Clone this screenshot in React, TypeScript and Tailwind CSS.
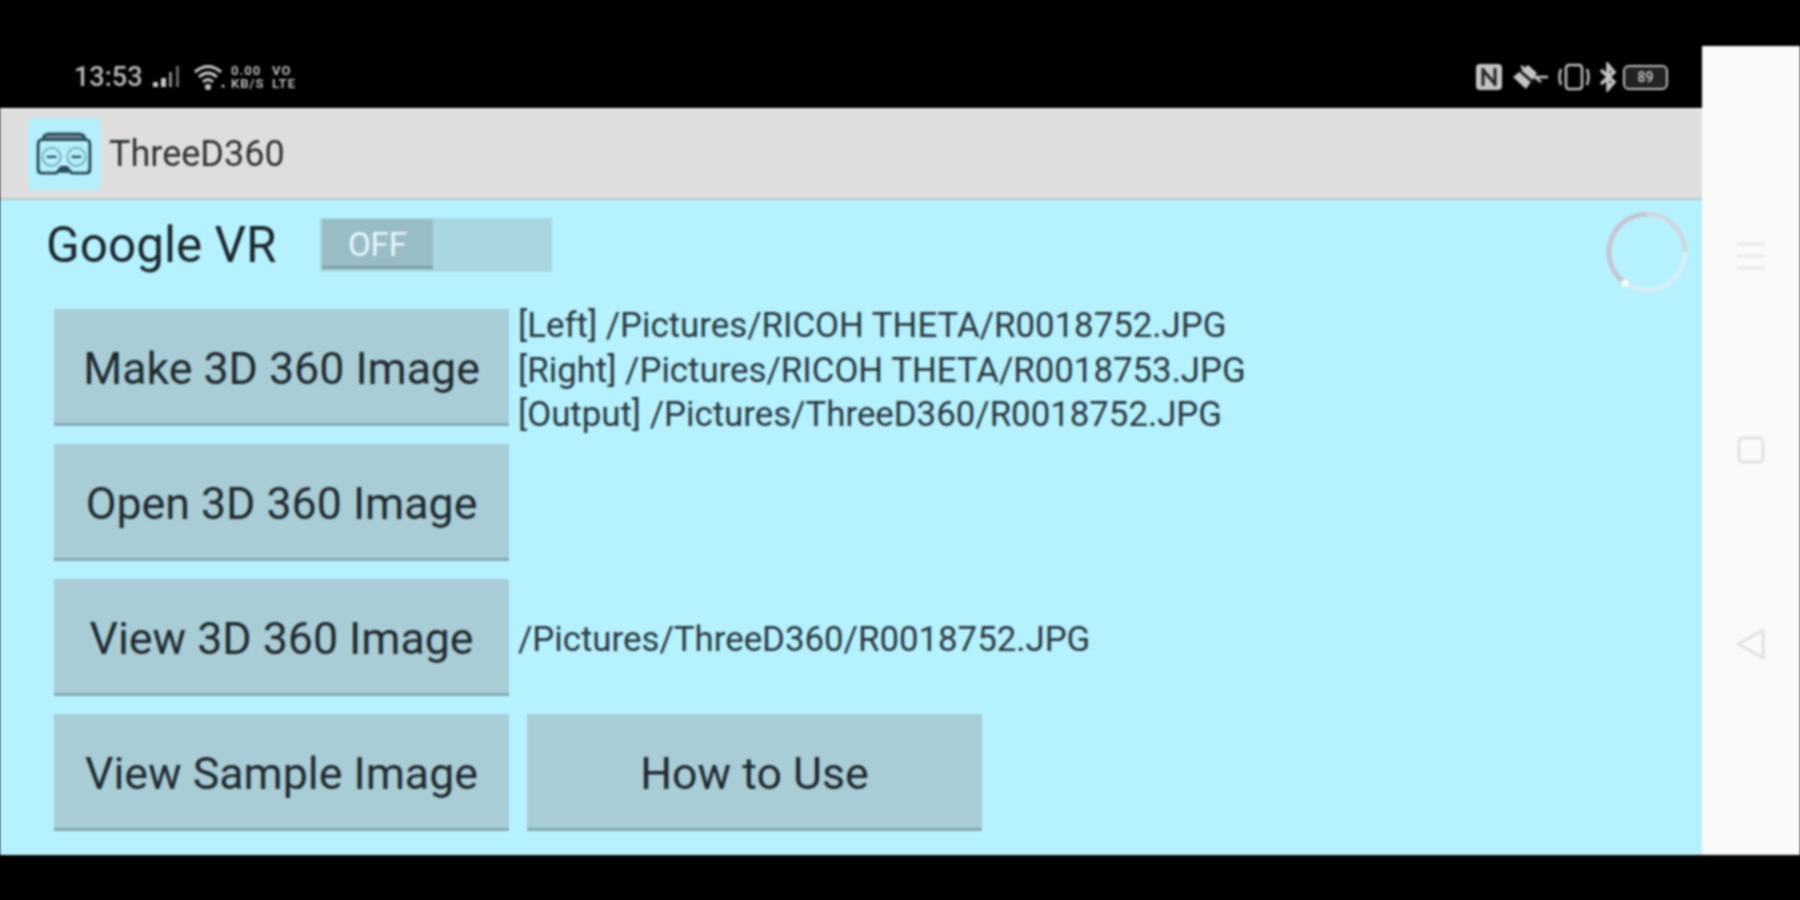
import React from "react";

function Btn({ label, className = "" }: { label: string; className?: string }) {
  return (
    <div className={"w-[455px] h-[117px] shrink-0 pt-[8px] flex items-center justify-center bg-[#a8cdd6] border-b-[3px] border-[#84a8b3] text-[44.7px] text-[#1f2a30] " + className}>
      {label}
    </div>
  );
}

function Goggles() {
  return (
    <svg width="58" height="46" viewBox="0 0 60 48" fill="none" stroke="#2b4a55" strokeWidth="3">
      <path d="M8 10 Q8 3 15 3 H45 Q52 3 52 10" fill="#6d8a93" />
      <path d="M3 14 Q3 9 8 9 H52 Q57 9 57 14 V40 Q57 44 53 44 H38 L33 38 H27 L22 44 H7 Q3 44 3 40 Z" />
      <circle cx="17" cy="27" r="9.5" strokeWidth="1.5" stroke="#6f9aa6" />
      <circle cx="43" cy="27" r="9.5" strokeWidth="1.5" stroke="#6f9aa6" />
      <path d="M12 27 H22 M38 27 H48" strokeWidth="2.5" />
      <path d="M26 42 L30 38 L34 42 Z" fill="#1d2b30" />
    </svg>
  );
}

function LeftStatus() {
  return (
    <div className="flex items-center h-full pl-[74px] pt-[46px] text-[#b9b9b9] blur-[0.6px]">
      <span className="text-[27px] font-medium leading-none w-[78px]">13:53</span>
      <svg width="32" height="24" viewBox="0 0 32 24" fill="#c4c4c4" className="mr-[9px]">
        <rect x="1" y="17" width="5" height="5" />
        <rect x="9" y="13" width="5" height="9" />
        <rect x="17" y="7" width="3" height="15" fill="#8a8a8a" />
        <rect x="24" y="1" width="3" height="21" fill="#666" />
      </svg>
      <svg width="34" height="26" viewBox="0 0 34 26" fill="none" stroke="#c4c4c4" strokeWidth="3" className="mr-[4px]">
        <path d="M2 8 Q15 -3 28 8" />
        <path d="M6 13 Q15 5 24 13" />
        <path d="M10 18 Q15 13 20 18" />
        <circle cx="15" cy="23" r="1.6" fill="#c4c4c4" />
        <circle cx="30" cy="22" r="1.6" fill="#c4c4c4" stroke="none" />
      </svg>
      <div className="flex flex-col text-[13px] leading-[13px] tracking-[1px] font-bold w-[38px] text-[#b8b8b8] mr-[3px]">
        <span>0.00</span>
        <span>KB/S</span>
      </div>
      <div className="flex flex-col text-[13px] leading-[13px] tracking-[1px] font-bold text-[#b8b8b8]">
        <span>VO</span>
        <span>LTE</span>
      </div>
    </div>
  );
}

function RightStatus() {
  return (
    <div className="flex items-center pr-[34px] pt-[46px] h-full text-[#bdbdbd] blur-[0.6px]">
      <svg width="28" height="30" viewBox="0 0 28 30" fill="none" className="mr-[8px]">
        <rect x="1" y="2" width="26" height="26" rx="4" fill="#c4c4c4" />
        <path d="M8 6 V24 M8 8 L20 22 M20 6 V24" stroke="#222" strokeWidth="3" />
      </svg>
      <svg width="38" height="30" viewBox="0 0 38 30" fill="none" className="mr-[8px]">
        <path d="M2 15 L17 3 L26 11 L15 27 Z" fill="#c4c4c4" />
        <path d="M10 4 L30 20 M22 15 H37" stroke="#c4c4c4" strokeWidth="2.5" />
        <path d="M8 8 L25 23" stroke="#111" strokeWidth="2.5" />
      </svg>
      <svg width="34" height="30" viewBox="0 0 34 30" fill="none" stroke="#bdbdbd" strokeWidth="2.5" className="mr-[8px]">
        <rect x="9" y="3" width="16" height="24" rx="3" />
        <path d="M4 7 Q1 15 4 23 M30 7 Q33 15 30 23" />
      </svg>
      <svg width="18" height="30" viewBox="0 0 18 30" fill="none" stroke="#c4c4c4" strokeWidth="3.5" className="mr-[6px]">
        <path d="M2 8 L15 20 L9 27 V3 L15 10 L2 22" />
      </svg>
      <div className="w-[45px] h-[25px] rounded-[6px] border-2 border-[#bdbdbd] flex items-center justify-center text-[14px] leading-none font-bold text-[#bdbdbd] bg-[#222]">
        89
      </div>
    </div>
  );
}

export default function App() {
  return (
    <div className="w-[1800px] h-[900px] bg-black overflow-hidden">
      <div className="w-[1800px] h-[900px] flex blur-[0.8px] [font-family:Roboto,sans-serif]">
        <div className="w-[1702px] h-[855px] flex flex-col shrink-0">
          <div className="h-[108px] flex justify-between shrink-0">
            <LeftStatus />
            <RightStatus />
          </div>

          <div className="h-[92px] shrink-0 bg-[#dedede] border-t-2 border-[#f0f0f0] border-b-2 border-b-[#b4c9cf] flex items-center pl-[28px] gap-[9px]">
            <div className="w-[72px] h-[72px] bg-[#b3f0fb] flex items-center justify-center">
              <Goggles />
            </div>
            <span className="text-[36px] text-[#2e3336]">ThreeD360</span>
          </div>

          <div className="flex-1 bg-[#b5f2fe] flex flex-col border-b border-[#d8fbff] relative">
            <div className="h-[109px] flex items-start pt-[18px] pl-[46px] shrink-0">
              <span className="text-[49.5px] leading-[54px] text-[#1c272c] w-[274px]">Google VR</span>
              <div className="w-[232px] h-[54px] bg-[#a8d7e0] flex">
                <div className="w-[111px] h-[50px] mt-[1px] ml-[2px] pt-[4px] bg-[#98bdc7] border-b-[3px] border-[#7d9fa9] flex items-center justify-center text-[33px] text-[#e9f7fa]">
                  OFF
                </div>
              </div>
            </div>

            <div className="flex flex-col gap-[18px] pl-[54px]">
              <div className="flex h-[117px]">
                <Btn label="Make 3D 360 Image" />
                <div className="pl-[9px] text-[34.8px] leading-[44.5px] text-[#2a383f] -mt-[6px]">
                  <div>[Left] /Pictures/RICOH THETA/R0018752.JPG</div>
                  <div>[Right] /Pictures/RICOH THETA/R0018753.JPG</div>
                  <div>[Output] /Pictures/ThreeD360/R0018752.JPG</div>
                </div>
              </div>
              <Btn label="Open 3D 360 Image" />
              <div className="flex items-center">
                <Btn label="View 3D 360 Image" />
                <div className="pl-[9px] pt-[4px] text-[34.8px] text-[#2a383f]">/Pictures/ThreeD360/R0018752.JPG</div>
              </div>
              <div className="flex gap-[18px]">
                <Btn label="View Sample Image" />
                <Btn label="How to Use" />
              </div>
            </div>

            <svg width="88" height="88" viewBox="0 0 88 88" fill="none" strokeWidth="5" className="absolute right-[11px] top-[8px]">
              <circle cx="44" cy="44" r="38" stroke="#d6eef5" />
              <path d="M22 75 A38 38 0 0 1 44 6" stroke="#c3c6d2" />
              <path d="M44 6 A38 38 0 0 1 82 44" stroke="#cdd8e2" />
              <circle cx="22" cy="75" r="3.5" fill="#ffffff" stroke="none" />
            </svg>
          </div>
        </div>

        <div className="w-[98px] h-[809px] mt-[46px] bg-[#fafafa] flex flex-col items-center shrink-0">
          <svg width="30" height="30" viewBox="0 0 30 30" stroke="#ececec" strokeWidth="3.5" className="mt-[195px]">
            <path d="M1 3 H29 M1 15 H29 M1 27 H29" />
          </svg>
          <svg width="30" height="30" viewBox="0 0 30 30" fill="none" stroke="#e2e2e2" strokeWidth="3" className="mt-[164px]">
            <rect x="3" y="3" width="24" height="24" rx="4" />
          </svg>
          <svg width="32" height="32" viewBox="0 0 32 32" fill="none" stroke="#e2e2e2" strokeWidth="3" className="mt-[163px]">
            <path d="M3 16 L28 2 V30 Z" strokeLinejoin="round" />
          </svg>
        </div>
      </div>
    </div>
  );
}
